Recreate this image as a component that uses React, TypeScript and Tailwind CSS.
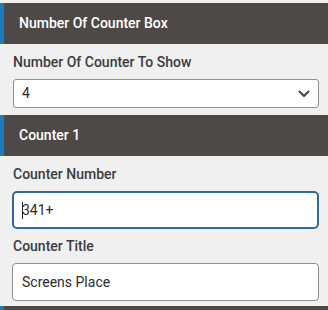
import React from "react";

const font = { fontFamily: "Roboto, 'Noto Sans', sans-serif" };

function Header({ title }: { title: string }) {
  return (
    <div className="h-[41px] bg-[#4e4946] border-l-4 border-[#1a7bbd] flex items-center pl-[15px] text-white text-[14px] font-medium">
      {title}
    </div>
  );
}

export default function App() {
  return (
    <div style={font} className="w-[328px] h-[310px] bg-[#f0f0f0] overflow-hidden pt-[3px]">
      <Header title="Number Of Counter Box" />
      <div className="pl-[13px] pr-[9px] pt-[8px] pb-[7px] flex flex-col gap-[7px]">
        <div className="h-[20px] leading-[20px] text-[14px] font-medium text-[#3c3c3c]">Number Of Counter To Show</div>
        <div className="h-[29px] bg-white border border-[#8c8f94] rounded-[3px] flex items-center justify-between pl-[8px] pr-[8px] text-[14px] text-[#2c2c2c]">
          <span>4</span>
          <svg width="12" height="8" viewBox="0 0 12 8" className="mt-[1px]">
            <path d="M1.5 1.5 L6 6 L10.5 1.5" fill="none" stroke="#444" strokeWidth="2" strokeLinecap="round" strokeLinejoin="round" />
          </svg>
        </div>
      </div>
      <Header title="Counter 1" />
      <div className="pl-[12px] pr-[9px] pt-[8px] pb-[5px] flex flex-col gap-[7px]">
        <div className="h-[20px] leading-[20px] text-[14px] font-medium text-[#3c3c3c] pl-[1px]">Counter Number</div>
        <div className="h-[38px] bg-white border-2 border-[#2e6ba6] rounded-[5px] flex items-center pl-[8px] text-[14px] text-[#2c2c2c]">
          <span className="w-px h-[17px] bg-[#222] mr-[-1px]"></span>
          <span>341+</span>
        </div>
        <div className="h-[20px] leading-[20px] text-[14px] font-medium text-[#3c3c3c] pl-[1px]">Counter Title</div>
        <div className="h-[38px] bg-white border border-[#8c8f94] rounded-[4px] flex items-center pl-[9px] text-[14px] text-[#2c2c2c]">
          Screens Place
        </div>
      </div>
      <div className="h-[10px] bg-[#4e4946] border-l-4 border-[#1a7bbd]"></div>
    </div>
  );
}
